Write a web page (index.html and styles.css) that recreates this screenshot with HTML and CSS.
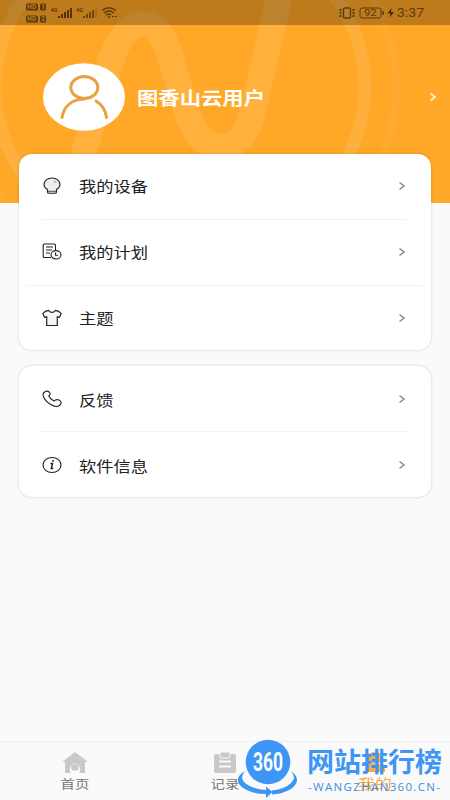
FILE: index.html
```html
<!DOCTYPE html>
<html lang="zh-CN">
<head>
<meta charset="utf-8">
<title>我的</title>
<link rel="stylesheet" href="styles.css">
</head>
<body>
<div class="app">
  <header class="hero">
    <svg class="pattern" viewBox="0 0 450 203" fill="none" stroke="#fff">
      <ellipse cx="180" cy="87" rx="185" ry="165" stroke-width="13" opacity=".1"/>
      <ellipse cx="180" cy="87" rx="216" ry="197" stroke-width="7" opacity=".05"/>
      <path d="M81 163L107 75Q119 24 143 24Q164 24 174 70L188 115Q200 147 220 147Q243 147 252 115L281 -10" stroke-width="26" opacity=".11"/>
    </svg>
    <div class="status">
      <svg class="signals" width="120" height="25" viewBox="0 0 120 25" fill="none" stroke="#593c0c">
        <g fill="#593c0c" stroke="none"><rect x="26" y="3.5" width="12" height="7" rx="1.5"/><rect x="40" y="3.5" width="6" height="7" rx="1.5"/><rect x="26" y="15.5" width="12" height="7" rx="1.5"/><rect x="40" y="15.5" width="6" height="7" rx="1.5"/></g>
        <g fill="#bd7c1f" stroke="none" font-family="Roboto" font-size="6.5" font-weight="700"><text x="27.3" y="9.4">HD</text><text x="41.3" y="9.4">1</text><text x="27.3" y="21.4">HD</text><text x="41.3" y="21.4">2</text></g>
        <g fill="#593c0c" stroke="none" font-family="Roboto" font-size="5.5" font-weight="700"><text x="50.5" y="12">4G</text><text x="76" y="12">4G</text></g>
        <path d="M59 18v-2M62 18v-4M65 18v-6M68 18v-8M71 18v-10" stroke="#42290a" stroke-width="1.7"/>
        <path d="M84 18v-2M87 18v-4M90 18v-6M93 18v-8" stroke-width="1.6"/>
        <path d="M96 18v-10" stroke-width="1.5" opacity=".3"/>
        <path d="M102 10.5Q109 5 116 10.5M104 13Q109 9 114 13M106 15.2Q109 13 111 15" stroke-width="1.4"/><circle cx="109" cy="17" r=".7"/><path d="M112 16.5h5" stroke-dasharray="2 1"/>
      </svg>
      <svg width="112" height="25" viewBox="338 0 112 25" fill="none" stroke="#593c0c">
        <rect x="343.5" y="8" width="7" height="10" rx="1.2" stroke-width="1.4"/>
        <path d="M340.5 9v8M353.5 9v8" stroke-width="2" stroke-dasharray="2 1"/>
        <rect x="360" y="8" width="21" height="10" rx="2"/><path d="M383 11v4" stroke-width="1.5"/>
        <path d="M391.5 8l-4 5.5h3l-.8 4 4.2-5.5h-3z" fill="#42290a" stroke="none"/>
        <text x="364" y="16.3" font-family="Roboto" font-size="9.5" textLength="12.5" lengthAdjust="spacingAndGlyphs" fill="#593c0c" stroke="none">92</text>
        <text x="397" y="17.4" font-family="Roboto" font-size="12.5" textLength="27" lengthAdjust="spacingAndGlyphs" fill="#593c0c" stroke="none">3:37</text>
      </svg>
    </div>
    <div class="profile">
      <svg class="avatar" viewBox="0 0 82 68">
        <ellipse cx="41" cy="34" rx="41" ry="33.7" fill="#fff"/>
        <g fill="none" stroke="#eaa144" stroke-width="3" stroke-linecap="round"><ellipse cx="41.3" cy="24.500" rx="13.500" ry="11"/><path d="M19 54.500C21 43 29 36.500 41 36M53 38C59 41.500 62.500 47 63.500 54.500"/></g>
      </svg>
      <h1 class="wide">图香山云用户</h1>
      <svg class="arrow light" viewBox="0 0 8 10"><path d="M1.500 1.500L6 5L1.500 8.500"/></svg>
    </div>
  </header>
  <main>
    <section class="card first">
      <div class="row">
        <svg class="icon" viewBox="0 0 20 18"><path d="M5.500 12.500Q2 10.500 2 7.500A8 6.500 0 0 1 18 7.500Q18 10.500 14.500 12.500V15Q14.500 16.300 13 16.300H7Q5.500 16.300 5.500 15Z" fill="#eee"/><path d="M6 14.300h8M12.300 4.500l1.200.8" stroke-width=".8"/></svg>
        <span class="wide">我的设备</span><svg class="arrow" viewBox="0 0 8 10"><path d="M1.500 1.500L6 5L1.500 8.500"/></svg>
      </div>
      <div class="line"></div>
      <div class="row">
        <svg class="icon" viewBox="0 0 20 18"><path d="M9 14.500H2Q1.200 14.500 1.200 13.500V2Q1.200 1 2.200 1H12.500Q13.500 1 13.500 2V7M4 4h7M4 7h6M4 10h4"/><ellipse cx="14" cy="11.800" rx="5" ry="4.200"/><path d="M13.500 9.500v2.800h2.500"/></svg>
        <span class="wide">我的计划</span><svg class="arrow" viewBox="0 0 8 10"><path d="M1.500 1.500L6 5L1.500 8.500"/></svg>
      </div>
      <div class="line long"></div>
      <div class="row">
        <svg class="icon" viewBox="0 0 20 18"><path d="M6.500 1.300Q10 5.500 13.500 1.300Q17 1.600 19.200 4.500L17.500 8.300L15.300 7.800V16.500H4.700V7.800L2.500 8.300L.8 4.500Q3 1.600 6.500 1.300Z" fill="#f5f5f5" stroke-width="1.200"/></svg>
        <span class="wide">主题</span><svg class="arrow" viewBox="0 0 8 10"><path d="M1.500 1.500L6 5L1.500 8.500"/></svg>
      </div>
    </section>
    <section class="card second">
      <div class="row">
        <svg class="icon" viewBox="0 0 20 18"><path d="M2 2.500Q5-.3 7.500 2.300Q9 4.500 6.800 6Q8 9 12 11Q14 9 17 10Q21 12.500 17.500 15.500Q14 18 8 14Q3 11 1.200 6Q.6 4 2 2.500Z"/></svg>
        <span class="wide">反馈</span><svg class="arrow" viewBox="0 0 8 10"><path d="M1.500 1.500L6 5L1.500 8.500"/></svg>
      </div>
      <div class="line"></div>
      <div class="row">
        <svg class="icon" viewBox="0 0 20 18"><ellipse cx="10" cy="9" rx="9" ry="7.500"/><path d="M8.500 7.500h2L9.300 12.500h2" stroke-width="1.500"/><circle cx="11" cy="4.900" r=".7" fill="#111" stroke-width=".6"/></svg>
        <span class="wide">软件信息</span><svg class="arrow" viewBox="0 0 8 10"><path d="M1.500 1.500L6 5L1.500 8.500"/></svg>
      </div>
    </section>
  </main>
  <nav>
    <div class="tab"><svg viewBox="0 0 26 22"><path d="M13 0L26 10H23V21H17.500Q20 13 13 11.500Q6 13 8.500 21H3V10H0Z"/><ellipse cx="13" cy="15.500" rx="3.800" ry="3.300"/></svg><span class="wide">首页</span></div>
    <div class="tab"><svg viewBox="0 0 26 22"><rect x="2" y="2" width="22" height="19" rx="2"/><rect x="8" y="0" width="10" height="6" rx="1.500" stroke="#fafafa"/><path d="M7 9.500h12M7 14.500h12" stroke="#fafafa" stroke-width="1.800"/></svg><span class="wide">记录</span></div>
    <div class="tab active"><svg viewBox="0 0 26 22"><ellipse cx="13" cy="6" rx="8" ry="6"/><path d="M3 20V18Q3 12 10 12H16Q23 12 23 18V20Z"/></svg><span class="wide">我的</span></div>
  </nav>
  <svg class="watermark" viewBox="0 0 214 64">
    <g fill="#3d96f5"><circle cx="30" cy="25" r="22.300"/><path d="M7 34C-4 40-2 49 11 54Q18 57 28 57V61L34.500 55L28 49.500V53Q14 52 7 46Q1 41 7 34Z"/><path d="M53 34C62 40 61 49 49 54Q43 57 34 57.500V53.500Q47 52 53 46Q59 41 53 34Z"/></g>
    <text x="15" y="33.500" class="badge" textLength="30" lengthAdjust="spacingAndGlyphs">360</text>
    <text x="69" y="34.500" class="brand" textLength="135" lengthAdjust="spacingAndGlyphs">网站排行榜</text>
    <text x="70" y="53.500" class="domain" textLength="132">-WANGZHAN360.CN-</text>
  </svg>
</div>
</body>
</html>
```
FILE: styles.css
```css
* { box-sizing: border-box; }
body { margin: 0; font-family: "Noto Sans CJK SC", sans-serif; background: #fafafa; }
.app { position: relative; width: 450px; height: 800px; overflow: hidden; display: flex; flex-direction: column; }
.hero { position: relative; height: 203px; flex: none; background: #ffa726; }
.pattern { position: absolute; inset: 0; width: 450px; height: 203px; }
.status { position: relative; height: 25px; display: flex; justify-content: space-between; background: rgba(0, 0, 0, .26); }
.profile { position: relative; display: flex; align-items: center; height: 68px; margin-top: 38px; padding: 0 13px 0 43px; }
.avatar { width: 82px; height: 68px; margin-right: 12px; }
.wide { display: inline-block; transform: scaleX(1.2); transform-origin: left center; white-space: nowrap; }
h1 { margin: 0; color: #fff; font-size: 17.8px; line-height: 26px; font-weight: 700; }
.arrow { width: 8px; height: 10px; margin-left: auto; fill: none; stroke: #888; stroke-width: 1.5; }
.arrow.light { stroke: #fff4d8; stroke-width: 1.8; }
main { position: relative; flex: 1; margin-top: -49px; padding: 0 19px; }
.card { height: 131px; margin-bottom: 16px; background: #fff; border-radius: 13px; box-shadow: 0 0 3px rgba(0, 0, 0, .18); }
.card.first { height: 196px; }
.row { display: flex; align-items: center; height: 65px; padding: 0 25px 0 23px; }
.first .row { padding-bottom: 2px; }
.row .wide { font-size: 14.4px; line-height: 22px; color: #222; margin-top: 1px; }
.second .wide { margin-top: 2px; }
.icon { width: 20px; height: 18px; margin-right: 17px; fill: none; stroke: #222; stroke-width: 1.1; }
.line { height: 1px; margin: 0 25px 0 23px; background: #f1f1f1; }
.line.long { margin: 0 8px; }
nav { height: 59px; flex: none; display: grid; grid-template-columns: repeat(3, 1fr); border-top: 1px solid #eee; }
.tab { display: flex; flex-direction: column; align-items: center; padding-top: 10px; color: #777; }
.tab svg { width: 26px; height: 22px; fill: #c9c9c9; }
.tab .wide { font-size: 12px; line-height: 18px; margin-top: 1px; transform-origin: center; }
.tab.active { color: #f6a940; }
.tab.active svg { fill: #f6a940; }
.tab.active .wide { font-size: 14px; margin-top: 0; }
.watermark { position: absolute; left: 238px; top: 737px; width: 214px; height: 64px; }
.badge { font: 700 25px "Roboto", sans-serif; fill: #fff; }
.brand { font: 700 27px "Noto Sans CJK SC", sans-serif; fill: #3d96f5; }
.domain { font: 400 11.5px "Open Sans", sans-serif; fill: #3d8fdc; }
```
